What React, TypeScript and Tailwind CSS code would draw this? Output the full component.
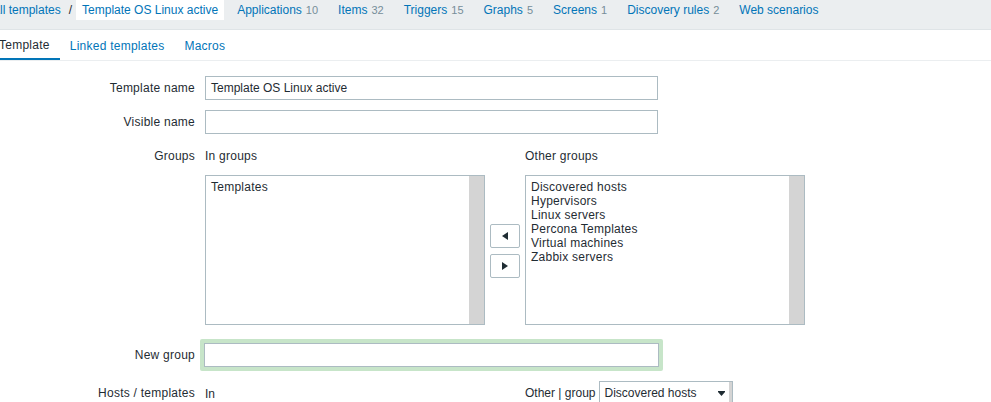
import { ReactNode } from 'react';

const nav = [
  { label: 'Applications', count: '10' },
  { label: 'Items', count: '32' },
  { label: 'Triggers', count: '15' },
  { label: 'Graphs', count: '5' },
  { label: 'Screens', count: '1' },
  { label: 'Discovery rules', count: '2' },
  { label: 'Web scenarios', count: '' },
];

const otherGroups = ['Discovered hosts', 'Hypervisors', 'Linux servers', 'Percona Templates', 'Virtual machines', 'Zabbix servers'];

function ListBox({ items }: { items: string[] }) {
  return (
    <div className="relative w-[280px] h-[150px] border border-[#acbbc2] bg-white">
      <div className="pl-[5px] pt-[4px] leading-[14px] tracking-[0.25px]">
        {items.map(i => <div key={i}>{i}</div>)}
      </div>
      <div className="absolute right-0 top-0 bottom-0 w-[15px] bg-[#d4d4d4]" />
    </div>
  );
}

function Label({ children }: { children: ReactNode }) {
  return <div className="text-right whitespace-nowrap tracking-[0.25px]">{children}</div>;
}

function ArrowBtn({ dir }: { dir: 'left' | 'right' }) {
  return (
    <div className="w-[30px] h-[24px] border border-[#acbbc2] rounded-[2px] bg-white flex items-center justify-center">
      <svg width="6" height="8" viewBox="0 0 6 8">
        {dir === 'left' ? <path d="M6 0 L0 4 L6 8 Z" fill="#1f2c33" /> : <path d="M0 0 L6 4 L0 8 Z" fill="#1f2c33" />}
      </svg>
    </div>
  );
}

export default function App() {
  return (
    <div className="w-[991px] h-[402px] overflow-hidden bg-white font-['Liberation_Sans',Arial,sans-serif] text-[12px] text-[#1f2c33]">
      {/* breadcrumb / nav bar */}
      <div className="h-[30px] bg-[#ebeef0] border-b border-[#dfe4e7] flex items-start">
        <div className="h-[20px] flex items-center ml-[-8px] text-[#0275b8]">All templates</div>
        <div className="h-[20px] flex items-center pl-[8px] pr-[4px] text-[#1f2c33]">/</div>
        <div className="h-[20px] flex items-center px-[6px] bg-white text-[#0275b8]">Template OS Linux active</div>
        <div className="flex ml-[3px]">
          {nav.map(n => (
            <div key={n.label} className="h-[20px] flex items-center px-[10px] text-[#0275b8] whitespace-nowrap">
              {n.label}
              {n.count && <span className="ml-[4px] text-[#768d99] text-[11px]">{n.count}</span>}
            </div>
          ))}
        </div>
      </div>

      {/* tabs */}
      <div className="h-[31px] border-b border-[#ebeef0] flex tracking-[0.25px]">
        <div className="ml-[-11px] px-[10px] h-[30px] flex items-center border-b-2 border-[#0275b8] pt-[2px]">Template</div>
        <div className="px-[10px] h-[30px] flex items-center text-[#0275b8] pt-[2px]">Linked templates</div>
        <div className="px-[10px] h-[30px] flex items-center text-[#0275b8] pt-[2px]">Macros</div>
      </div>

      {/* form */}
      <div className="grid grid-cols-[195px_1fr] gap-x-[10px] mt-[15px] items-center">
        <Label>Template name</Label>
        <div className="w-[453px] h-[24px] border border-[#acbbc2] flex items-center px-[5px]">Template OS Linux active</div>

        <div className="col-span-2 h-[10px]" />
        <Label>Visible name</Label>
        <div className="w-[453px] h-[24px] border border-[#acbbc2]" />

        <div className="col-span-2 h-[15px]" />
        <div className="self-start leading-[14px]"><Label>Groups</Label></div>
        <div className="flex items-center gap-[5px]">
          <div>
            <div className="leading-[14px] mb-[12px] tracking-[0.25px]">In groups</div>
            <ListBox items={['Templates']} />
          </div>
          <div className="flex flex-col gap-[6px] mt-[27px]">
            <ArrowBtn dir="left" />
            <ArrowBtn dir="right" />
          </div>
          <div>
            <div className="leading-[14px] mb-[12px] tracking-[0.25px]">Other groups</div>
            <ListBox items={otherGroups} />
          </div>
        </div>

        <div className="col-span-2 h-[14px]" />
        <Label>New group</Label>
        <div className="ml-[-5px] w-[463px] p-[4px] bg-[#c7e5c9] rounded-[2px]">
          <div className="h-[24px] border border-[#acbbc2] bg-white" />
        </div>

        <div className="col-span-2 h-[10px]" />
        <Label>Hosts / templates</Label>
        <div className="flex items-center">
          <div className="w-[320px] pt-[2px]">In</div>
          <div className="flex items-center">
            <span className="mr-[3px]">Other | group</span>
            <div className="relative w-[134px] h-[24px] border border-[#acbbc2] flex items-center pl-[5px]">
              Discovered hosts
              <svg className="absolute right-[7px] top-[9px]" width="7" height="5" viewBox="0 0 7 5"><path d="M0 0 L7 0 L7 1 L0 1 Z M0 1 L7 1 L3.5 5 Z" fill="#1f2c33" /></svg>
              <div className="absolute right-0 top-0 bottom-0 w-[3px] bg-[#d4d4d4]" />
            </div>
          </div>
        </div>
      </div>
    </div>
  );
}
